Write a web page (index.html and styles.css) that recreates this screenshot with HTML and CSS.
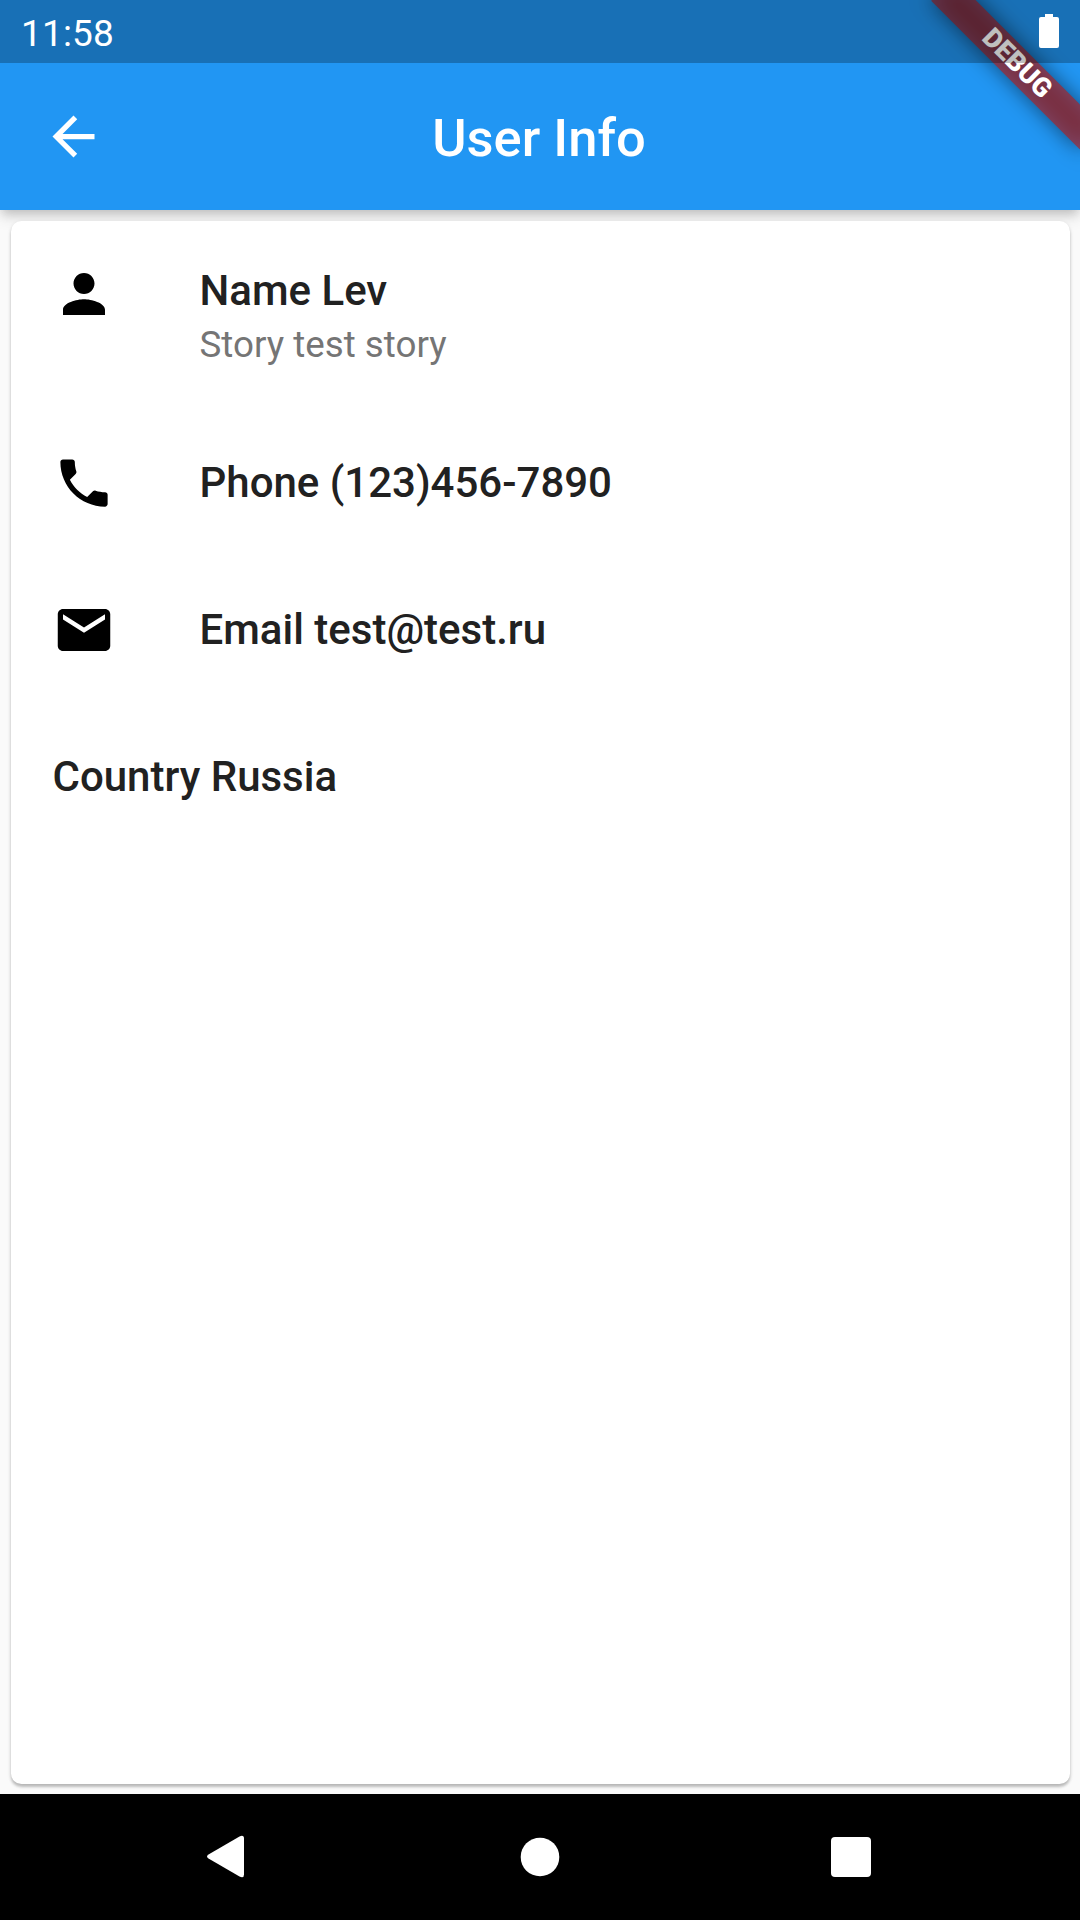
FILE: index.html
```html
<!DOCTYPE html>
<html lang="en">
<head>
<meta charset="utf-8">
<title>User Info</title>
<link rel="stylesheet" href="styles.css">
</head>
<body>
<div class="screen">
  <header class="app-bar">
    <svg class="icon back" viewBox="0 0 24 24"><path d="M20 11H7.83l5.59-5.59L12 4l-8 8 8 8 1.41-1.41L7.83 13H20v-2z"/></svg>
    <h1 class="app-title">User Info</h1>
  </header>
  <main class="body">
    <section class="card">
      <div class="tile two-line">
        <svg class="icon" viewBox="0 0 24 24"><path d="M12 12c2.21 0 4-1.79 4-4s-1.79-4-4-4-4 1.79-4 4 1.79 4 4 4zm0 2c-2.67 0-8 1.34-8 4v2h16v-2c0-2.66-5.33-4-8-4z"/></svg>
        <div class="lines">
          <p class="title">Name Lev</p>
          <p class="subtitle">Story test story</p>
        </div>
      </div>
      <div class="tile">
        <svg class="icon" viewBox="0 0 24 24"><path d="M6.62 10.79c1.44 2.83 3.76 5.14 6.59 6.59l2.2-2.2c.27-.27.67-.36 1.02-.24 1.12.37 2.33.57 3.57.57.55 0 1 .45 1 1V20c0 .55-.45 1-1 1-9.39 0-17-7.61-17-17 0-.55.45-1 1-1h3.500c.55 0 1 .45 1 1 0 1.250.2 2.450.57 3.570.11.350.030.740-.25 1.020l-2.200 2.200z"/></svg>
        <p class="title">Phone (123)456-7890</p>
      </div>
      <div class="tile">
        <svg class="icon" viewBox="0 0 24 24"><path d="M20 4H4c-1.100 0-1.990.9-1.990 2L2 18c0 1.100.9 2 2 2h16c1.100 0 2-.9 2-2V6c0-1.100-.9-2-2-2zm0 4l-8 5-8-5V6l8 5 8-5v2z"/></svg>
        <p class="title">Email test@test.ru</p>
      </div>
      <div class="tile">
        <p class="title">Country Russia</p>
      </div>
    </section>
  </main>
  <nav class="nav-bar">
    <svg class="nav-icon" viewBox="0 0 56 56"><path d="M7.500 25.500 L38.500 7.400 Q43 5.500 43 9.500 V45.500 Q43 49.500 38.500 47.600 L7.500 29.500 Q4.500 27.500 7.500 25.500Z"/></svg>
    <svg class="nav-icon" viewBox="0 0 56 56"><circle cx="28" cy="28" r="19.300"/></svg>
    <svg class="nav-icon" viewBox="0 0 56 56"><rect x="8" y="8" width="40" height="40" rx="4"/></svg>
  </nav>
  <div class="banner-layer"><div class="banner"><span class="banner-text">DEBUG</span></div></div>
  <div class="status-bar">
    <span class="clock">11:58</span>
    <svg class="battery" viewBox="0 0 20 34"><path d="M6 0h8v3h4q2 0 2 2v27q0 2-2 2H2q-2 0-2-2V5q0-2 2-2h4z"/></svg>
  </div>
</div>
</body>
</html>
```
FILE: styles.css
```css
* { box-sizing: border-box; }
body { margin: 0; font-family: Roboto, "Liberation Sans", sans-serif; }
h1, p { margin: 0; }

.screen {
  position: relative;
  display: flex;
  flex-direction: column;
  width: 1080px;
  height: 1920px;
  overflow: hidden;
  background: #fafafa;
}

.app-bar {
  display: grid;
  grid-template-columns: 147px 1fr 149px;
  align-items: center;
  height: 210px;
  padding-top: 63px;
  background: #2196f3;
  box-shadow: 0 5px 10px -2px rgba(0, 0, 0, .2), 0 10px 13px rgba(0, 0, 0, .07);
}
.app-title {
  padding-top: 2px;
  color: #fff;
  font-size: 52.5px;
  font-weight: 500;
  line-height: 62px;
  text-align: center;
}
.icon { flex: none; width: 63px; height: 63px; }
.back { justify-self: center; fill: #fff; }

.body { flex: 1; display: flex; padding: 10.5px; }
.card {
  flex: 1;
  border-radius: 10.5px;
  background: #fff;
  box-shadow: 0 3px 3px rgba(0, 0, 0, .22), 0 1px 4px rgba(0, 0, 0, .1);
}
.tile {
  display: flex;
  align-items: center;
  gap: 84px;
  height: 147px;
  padding: 0 42px;
}
.tile .icon { transform: translate(-.5px, -.5px); }
.two-line { align-items: flex-start; height: 189px; padding-top: 42px; }
.lines { padding-top: 3px; }
.title { color: #212121; font-size: 42px; font-weight: 500; line-height: 50px; }
.subtitle { color: #757575; font-size: 36.75px; line-height: 44px; margin-top: 7px; }

.nav-bar {
  display: flex;
  justify-content: space-between;
  align-items: center;
  height: 126px;
  padding: 0 201px;
  background: #000;
}
.nav-icon { width: 56px; height: 56px; fill: #fff; }

.status-bar {
  position: absolute;
  z-index: 3;
  inset: 0 0 auto 0;
  display: flex;
  justify-content: space-between;
  height: 63px;
  padding: 14px 21px 0;
  background: rgba(0, 0, 0, .25);
}
.clock { padding-top: 1px; color: #fff; font-size: 37px; line-height: 38px; letter-spacing: .15px; }
.battery { width: 20px; height: 34px; fill: #fff; }

.banner-layer {
  position: absolute;
  z-index: 2;
  top: 0;
  right: 0;
  width: 210px;
  height: 210px;
  overflow: hidden;
}
.banner {
  position: absolute;
  top: 73.5px;
  left: 105px;
  width: 210px;
  height: 31.5px;
  transform-origin: 105px -73.5px;
  transform: rotate(45deg);
}
.banner::before, .banner::after { content: ""; position: absolute; inset: 0; }
.banner::before { background: rgba(0, 0, 0, .5); filter: blur(10.4px); }
.banner::after { background: rgba(183, 28, 28, .627); }
.banner-text {
  position: absolute;
  z-index: 1;
  inset: 0;
  color: #fff;
  font-size: 26.775px;
  font-weight: 900;
  line-height: 31.5px;
  text-align: center;
}
```
